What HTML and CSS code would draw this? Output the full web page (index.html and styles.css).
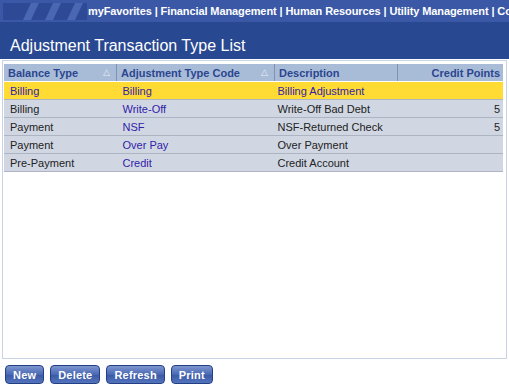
FILE: index.html
```html
<!DOCTYPE html>
<html lang="en">
<head>
    <meta charset="UTF-8">
    <title>Adjustment Transaction Type List</title>
    <link rel="stylesheet" href="styles.css">
</head>
<body>
    <div class="topbar">
        <svg class="stripes" width="84" height="17" viewBox="0 0 84 17">
            <rect x="0" y="0" width="84" height="17" fill="#2e4a96"/>
            <polygon points="20,17 28,0 36,0 28,17" fill="#4a67b3"/>
            <polygon points="42,17 50,0 58,0 50,17" fill="#4a67b3"/>
            <polygon points="64,17 72,0 80,0 72,17" fill="#4a67b3"/>
        </svg>
        <div class="nav">myFavorites | Financial Management | Human Resources | Utility Management | Cor</div>
    </div>
    <div class="titlebar">
        <h1>Adjustment Transaction Type List</h1>
    </div>

    <div class="panel">
        <table class="grid">
            <thead>
                <tr>
                    <th class="c1">Balance Type <span class="sort">&#9651;</span></th>
                    <th class="c2">Adjustment Type Code <span class="sort">&#9651;</span></th>
                    <th class="c3">Description</th>
                    <th class="c4 num">Credit Points</th>
                </tr>
            </thead>
            <tbody>
                <tr class="selected">
                    <td>Billing</td>
                    <td class="link">Billing</td>
                    <td class="desc">Billing Adjustment</td>
                    <td class="num"></td>
                </tr>
                <tr>
                    <td>Billing</td>
                    <td class="link">Write-Off</td>
                    <td class="desc">Write-Off Bad Debt</td>
                    <td class="num">5</td>
                </tr>
                <tr>
                    <td>Payment</td>
                    <td class="link">NSF</td>
                    <td class="desc">NSF-Returned Check</td>
                    <td class="num">5</td>
                </tr>
                <tr>
                    <td>Payment</td>
                    <td class="link">Over Pay</td>
                    <td class="desc">Over Payment</td>
                    <td class="num"></td>
                </tr>
                <tr>
                    <td>Pre-Payment</td>
                    <td class="link">Credit</td>
                    <td class="desc">Credit Account</td>
                    <td class="num"></td>
                </tr>
            </tbody>
        </table>
    </div>

    <div class="buttons">
        <button class="btn">New</button>
        <button class="btn">Delete</button>
        <button class="btn">Refresh</button>
        <button class="btn">Print</button>
    </div>
</body>
</html>
```

FILE: styles.css
```css
body {
    margin: 0;
    width: 509px;
    height: 387px;
    overflow: hidden;
    font-family: "Liberation Sans", Arial, sans-serif;
    background: #fff;
}
.topbar {
    height: 22px;
    background: #3b58a6;
    display: flex;
    align-items: center;
    white-space: nowrap;
    overflow: hidden;
}
.stripes {
    flex: none;
    margin-left: 3px;
}
.nav {
    margin-left: 1px;
    color: #fff;
    font-weight: bold;
    font-size: 11px;
    letter-spacing: -0.1px;
}
.titlebar {
    height: 37px;
    background: #284891;
    display: flex;
    align-items: flex-end;
}
h1 {
    margin: 0 0 4px 10px;
    color: #fff;
    font-size: 16px;
    font-weight: normal;
}
.panel {
    margin: 1px 2px 0 2px;
    height: 294px;
    border: 1px solid #c8d3e6;
    padding: 3px 3px 0 1px;
}
.grid {
    width: 100%;
    border-collapse: collapse;
    font-size: 11px;
    table-layout: fixed;
}
.grid th {
    background: #a9bcd7;
    color: #2b4690;
    font-weight: bold;
    text-align: left;
    height: 17px;
    padding: 0 3px 0 4px;
    border-left: 1px solid #e6ecf4;
    border-right: 1px solid #8092b3;
    border-bottom: 1px solid #fff;
    position: relative;
}
.grid th:first-child {
    border-left: none;
}
.grid th:last-child {
    border-right: none;
}
.c1 { width: 105px; }
.c2 { width: 150px; }
.c3 { width: 115px; }
.sort {
    position: absolute;
    right: 6px;
    top: 3px;
    font-size: 9px;
    color: #e8edf5;
    font-weight: normal;
}
.grid td {
    background: #d0d7e3;
    color: #222;
    height: 17px;
    padding: 0 3px 0 6px;
    border-bottom: 1px solid #aeb5c2;
    white-space: nowrap;
}
.grid td.desc {
    padding-left: 3px;
}
.grid td.link {
    color: #3222a8;
}
.grid tr.selected td {
    background: #ffdb33;
    color: #3222a8;
}
.num {
    text-align: right;
}
.grid th.num {
    text-align: right;
}
.buttons {
    display: flex;
    gap: 6px;
    margin: 6px 0 0 5px;
}
.btn {
    height: 19px;
    padding: 0 7px;
    font-family: "Liberation Sans", Arial, sans-serif;
    font-size: 11px;
    font-weight: bold;
    letter-spacing: 0.2px;
    color: #fff;
    border: 1px solid #233f84;
    border-radius: 4px;
    background: linear-gradient(#7d96cf, #4a69b4 50%, #3a58a3 51%, #5473bd);
}
```
